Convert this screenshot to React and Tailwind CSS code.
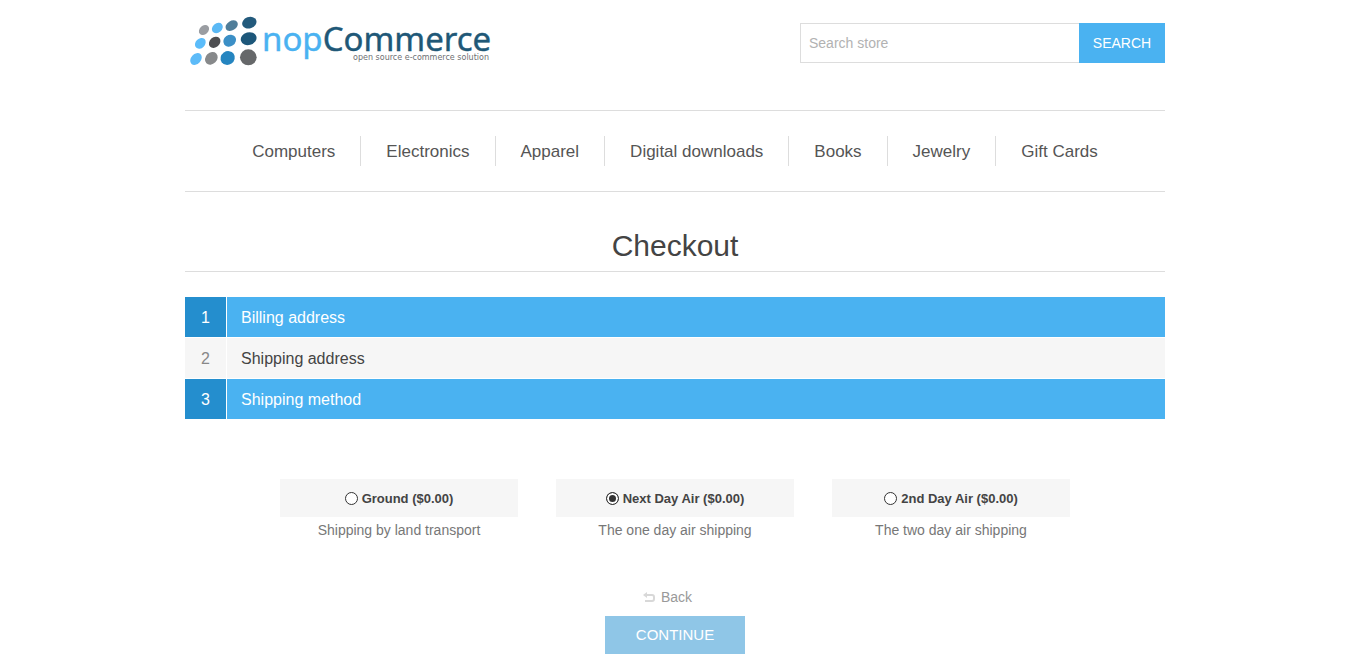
import { useState } from "react";

const categories = [
  "Computers",
  "Electronics",
  "Apparel",
  "Digital downloads",
  "Books",
  "Jewelry",
  "Gift Cards",
];

const steps = [
  { number: 1, title: "Billing address", active: true },
  { number: 2, title: "Shipping address", active: false },
  { number: 3, title: "Shipping method", active: true },
];

const methods = [
  { id: "ground", name: "Ground ($0.00)", description: "Shipping by land transport" },
  { id: "next-day", name: "Next Day Air ($0.00)", description: "The one day air shipping" },
  { id: "second-day", name: "2nd Day Air ($0.00)", description: "The two day air shipping" },
];

// Each dot: centre x, centre y, long radius, short radius, tilt, colour
const dots = [
  [57, 60, 17, 13, 42, "#9a9da2"],
  [97, 54, 18, 14, 40, "#5bb9f5"],
  [140, 47, 20, 14, 32, "#4f7d99"],
  [193, 38, 22, 17, 20, "#235a7c"],
  [46, 100, 18, 14, 45, "#5bbcfa"],
  [89, 97, 19, 15, 42, "#4e4f52"],
  [134, 92, 20, 17, 35, "#3b8fc6"],
  [191, 86, 24, 19, 15, "#1d577a"],
  [33, 147, 20, 15, 48, "#5dbbf8"],
  [79, 145, 21, 17, 45, "#87898b"],
  [128, 144, 22, 20, 35, "#2585c0"],
  [190, 142, 25, 24, 0, "#66686a"],
];

function Logo() {
  return (
    <svg viewBox="0 0 310 62" className="h-[62px] w-[310px]" role="img" aria-label="nopCommerce">
      <g transform="scale(0.3333)">
        {dots.map(([cx, cy, rx, ry, tilt, fill]) => (
          <ellipse
            key={`${cx}-${cy}`}
            cx={cx}
            cy={cy}
            rx={rx}
            ry={ry}
            fill={fill}
            transform={`rotate(-${tilt} ${cx} ${cy})`}
          />
        ))}
      </g>
      <text x="77" y="41" fontSize="33" fontFamily="'Noto Sans', sans-serif">
        <tspan fill="#4ab2f1" stroke="#4ab2f1" strokeWidth="0.4">nop</tspan>
        <tspan fill="#205877" stroke="#205877" strokeWidth="0.4">Commerce</tspan>
      </text>
      <text x="304" y="50" textAnchor="end" fontSize="8" fill="#6e7073" fontFamily="'DejaVu Sans', sans-serif">
        open source e-commerce solution
      </text>
    </svg>
  );
}

function BackIcon() {
  return (
    <svg viewBox="0 0 12 10" className="h-[10px] w-3" fill="none" aria-hidden="true">
      <path d="M3 3H9Q11 3 11 5V7Q11 9 9 9H2" stroke="#d8d8d8" strokeWidth="2" />
      <path d="M0 3L4 0V6Z" fill="#d8d8d8" />
    </svg>
  );
}

export default function App() {
  const [selected, setSelected] = useState("next-day");

  return (
    <div className="bg-white pr-4 font-['Liberation_Sans',Arial,sans-serif] text-sm text-[#777]">
      <div className="mx-auto max-w-[980px]">
        <header className="flex items-start justify-between pt-[10px] pb-[38px]">
          <a href="#home">
            <Logo />
          </a>
          <form className="mt-[13px] flex h-10" onSubmit={(e) => e.preventDefault()}>
            <input
              type="text"
              aria-label="Search store"
              placeholder="Search store"
              className="w-[279px] border border-r-0 border-[#ddd] px-2 text-[#777] outline-none placeholder:text-[#b2b2b2]"
            />
            <button type="submit" className="w-[86px] bg-[#4ab2f1] text-white">
              SEARCH
            </button>
          </form>
        </header>

        <nav className="border-y border-[#ddd] py-[25px]">
          <ul className="flex justify-center divide-x divide-[#ddd]">
            {categories.map((name) => (
              <li key={name} className="px-[25px]">
                <a href="#category" className="block pt-0.5 text-[17px] leading-7 text-[#555]">
                  {name}
                </a>
              </li>
            ))}
          </ul>
        </nav>

        <main>
          <h1 className="mb-[25px] border-b border-[#ddd] pt-8 pb-1 text-center text-[30px] leading-[43px] text-[#444]">
            Checkout
          </h1>

          <ol className="flex flex-col gap-px">
            {steps.map((step) => (
              <li key={step.number} className="flex gap-px text-base leading-[38px]">
                <span
                  className={
                    step.active
                      ? "w-[41px] bg-[#248ece] pt-0.5 text-center text-white"
                      : "w-[41px] bg-[#f6f6f6] pt-0.5 text-center text-[#888]"
                  }
                >
                  {step.number}
                </span>
                <h2
                  className={
                    step.active
                      ? "flex-1 bg-[#4ab2f1] px-[14px] pt-0.5 text-white"
                      : "flex-1 bg-[#f6f6f6] px-[14px] pt-0.5 text-[#444]"
                  }
                >
                  {step.title}
                </h2>
              </li>
            ))}
          </ol>

          <ul className="mx-auto mt-[60px] grid max-w-[790px] grid-cols-3 gap-[38px]">
            {methods.map((method) => (
              <li key={method.id} className="text-center">
                <div className="flex h-[38px] items-center justify-center gap-1 bg-[#f6f6f6]">
                  <input
                    type="radio"
                    id={method.id}
                    name="shipping"
                    checked={selected === method.id}
                    onChange={() => setSelected(method.id)}
                    className="size-[13px] appearance-none rounded-full border border-[#333] bg-white checked:bg-[#333] checked:shadow-[inset_0_0_0_2px_#fff]"
                  />
                  <label htmlFor={method.id} className="pt-0.5 text-[13px] font-bold text-[#444]">
                    {method.name}
                  </label>
                </div>
                <p className="pt-1 leading-[19px]">{method.description}</p>
              </li>
            ))}
          </ul>

          <div className="mt-[46px] flex flex-col items-center">
            <a href="#back" className="mr-[15px] flex items-center gap-[6px] leading-[22px] text-[#999]">
              <BackIcon />
              Back
            </a>
            <button type="button" className="mt-2 h-[38px] w-[140px] bg-[#8fc6e7] text-[15px] text-white">
              CONTINUE
            </button>
          </div>
        </main>
      </div>
    </div>
  );
}
